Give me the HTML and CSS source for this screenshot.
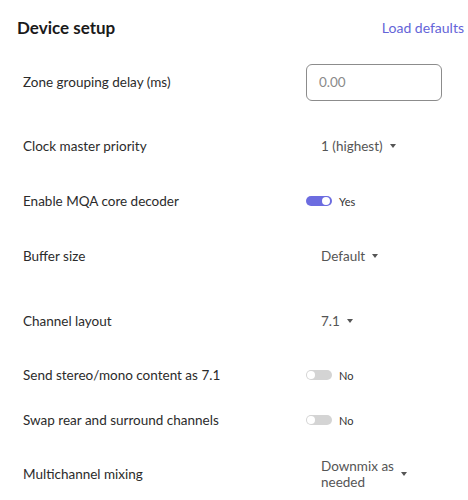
FILE: index.html
```html
<!DOCTYPE html>
<html lang="en">
<head>
    <meta charset="UTF-8">
    <meta name="viewport" content="width=device-width, initial-scale=1.0">
    <title>Device setup</title>
    <link rel="stylesheet" href="styles.css">
</head>
<body>
    <div class="panel">
        <div class="header">
            <h1>Device setup</h1>
            <a class="link" href="#">Load defaults</a>
        </div>

        <div class="row row-input">
            <div class="label">Zone grouping delay (ms)</div>
            <div class="control">
                <div class="text-input">0.00</div>
            </div>
        </div>

        <div class="row row-tall">
            <div class="label">Clock master priority</div>
            <div class="control">
                <div class="dropdown">1 (highest) <span class="caret"></span></div>
            </div>
        </div>

        <div class="row row-short">
            <div class="label">Enable MQA core decoder</div>
            <div class="control">
                <div class="toggle on"><span class="knob"></span></div>
                <span class="toggle-text">Yes</span>
            </div>
        </div>

        <div class="row row-tall">
            <div class="label">Buffer size</div>
            <div class="control">
                <div class="dropdown">Default <span class="caret"></span></div>
            </div>
        </div>

        <div class="row row-mid">
            <div class="label">Channel layout</div>
            <div class="control">
                <div class="dropdown">7.1 <span class="caret"></span></div>
            </div>
        </div>

        <div class="row row-toggle">
            <div class="label">Send stereo/mono content as 7.1</div>
            <div class="control">
                <div class="toggle"><span class="knob"></span></div>
                <span class="toggle-text">No</span>
            </div>
        </div>

        <div class="row row-short">
            <div class="label">Swap rear and surround channels</div>
            <div class="control">
                <div class="toggle"><span class="knob"></span></div>
                <span class="toggle-text">No</span>
            </div>
        </div>

        <div class="row row-last">
            <div class="label">Multichannel mixing</div>
            <div class="control">
                <div class="dropdown"><span class="multi">Downmix as<br>needed</span> <span class="caret"></span></div>
            </div>
        </div>
    </div>
</body>
</html>
```

FILE: styles.css
```css
body {
    font-family: 'Lato', 'Noto Sans', sans-serif;
    margin: 0;
    padding: 0;
    background: #fff;
    color: #2b2b2b;
}

.panel {
    width: 468px;
    overflow: hidden;
    height: 500px;
}

.header {
    display: flex;
    justify-content: space-between;
    align-items: center;
    height: 54px;
    padding: 0 4px 0 17px;
}

h1 {
    margin: 0;
    font-size: 17px;
    font-weight: 700;
    color: #1a1a1a;
}

.link {
    color: #6464d8;
    font-size: 14px;
    text-decoration: none;
}

.row {
    display: flex;
    align-items: center;
    padding-left: 23px;
    font-size: 13.5px;
}

.row-input { height: 56px; }
.row-tall { height: 72px; }
.row-short { height: 38px; }
.row-mid { height: 58px; }
.row-toggle { height: 50px; }
.row-short + .row-last { height: 68px; }
.row-toggle + .row-short { height: 40px; }

.label {
    width: 283px;
}

.control {
    display: flex;
    align-items: center;
}

.text-input {
    width: 122px;
    height: 35px;
    line-height: 35px;
    padding-left: 12px;
    border: 1px solid #8c8c8c;
    border-radius: 6px;
    color: #8a8a8a;
}

.dropdown {
    display: flex;
    align-items: center;
    padding-left: 15px;
    color: #555;
}

.multi {
    line-height: 16px;
}

.caret {
    display: inline-block;
    width: 0;
    height: 0;
    margin-left: 7px;
    border-left: 3.5px solid transparent;
    border-right: 3.5px solid transparent;
    border-top: 4px solid #555;
}

.toggle {
    position: relative;
    width: 26px;
    height: 10px;
    border-radius: 5px;
    background: #d4d4d4;
}

.toggle.on {
    background: #6c6ce0;
}

.knob {
    position: absolute;
    top: 1px;
    left: 1px;
    width: 8px;
    height: 8px;
    border-radius: 50%;
    background: #fff;
}

.toggle.on .knob {
    left: auto;
    right: 2px;
}

.toggle-text {
    margin-left: 7px;
    font-size: 11px;
    color: #333;
}
```
